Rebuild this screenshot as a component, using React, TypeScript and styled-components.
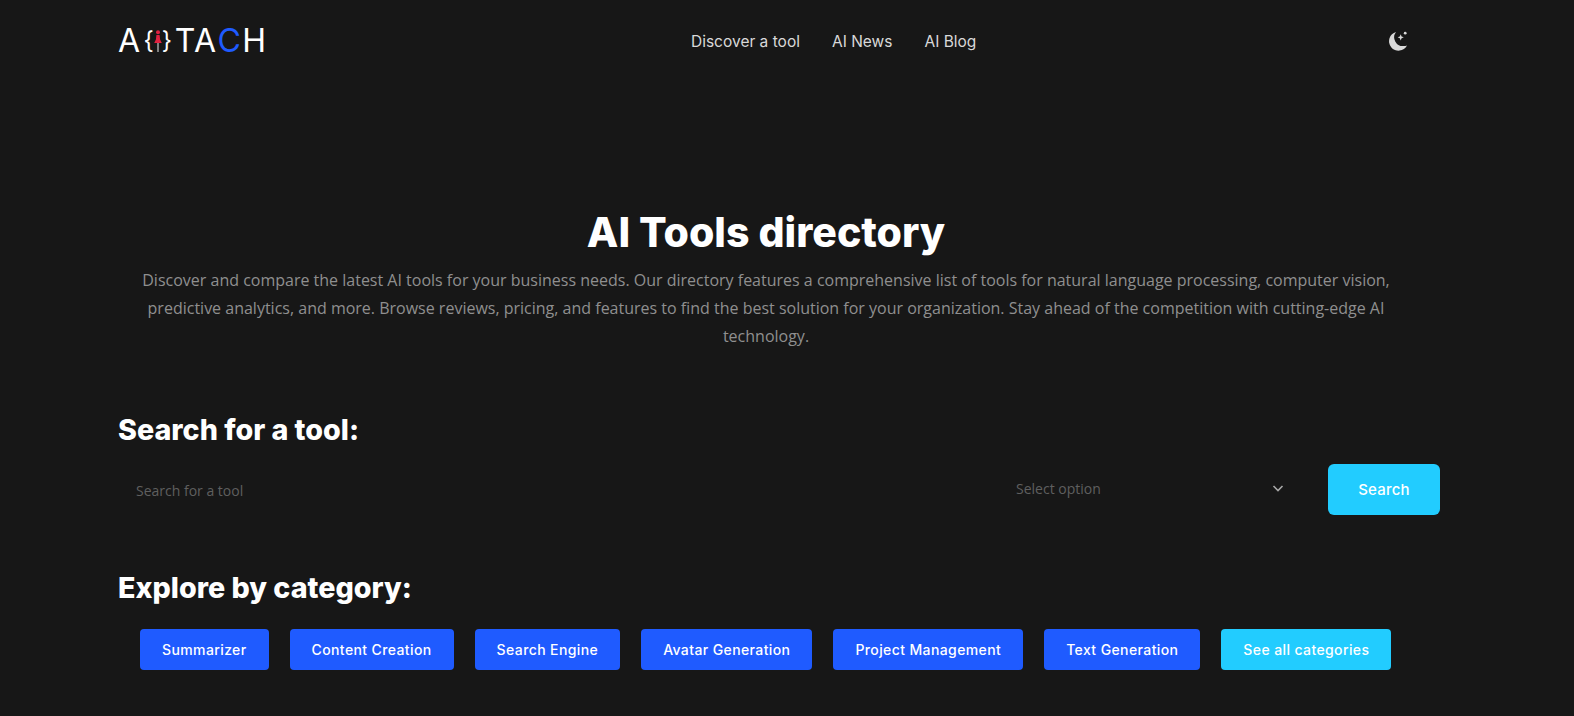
import React from "react";
import styled, { createGlobalStyle } from "styled-components";

const Global = createGlobalStyle`
  html, body { margin: 0; padding: 0; background: #171717; }
  body { font-family: "Open Sans", "Liberation Sans", sans-serif; overflow: hidden; }
`;
const display = `Inter, "Open Sans", sans-serif`;

const Page = styled.div`
  height: 716px; padding: 0 134px 0 118px; display: flex; flex-direction: column; overflow: hidden;
`;
const Header = styled.header`
  height: 82px; display: grid; grid-template-columns: 573px auto 1fr; align-items: center;
`;
const Logo = styled.div`
  display: flex; align-items: center; font-family: ${display}; font-weight: 400; font-size: 32px; line-height: 1; color: #fff; letter-spacing: 1.3px;
`;
const LogoBrace = styled.span<{ $side: "left" | "right" }>`
  font-size: 24px; font-weight: 400; letter-spacing: 0; margin: ${p => (p.$side === "left" ? "0 0 0 2px" : "0 3px 0 0")};
`;
const LogoBlue = styled.span`color: #1f5bff;`;
const Nav = styled.nav`
  display: flex; gap: 32px; font-family: ${display}; font-size: 15.5px; font-weight: 400; color: #d9d9d9;
`;
const ThemeButton = styled.div`
  justify-self: end; margin-right: 30px; display: flex; width: 22px; height: 22px; margin-top: -1px;
`;
const Hero = styled.section`
  margin-top: 123px; margin-right: 26px; text-align: center;
`;
const Title = styled.h1`
  margin: 0; font-family: ${display}; font-weight: 800; font-size: 41px; line-height: 54px; color: #fff;
`;
const Lead = styled.p`
  margin: 7px 0 0; font-size: 16px; line-height: 28px; color: #8f8f8f; padding: 0 20px;
`;
const SectionTitle = styled.h2`
  margin: 0; font-family: ${display}; font-weight: 800; font-size: 28.7px; line-height: 36px; color: #fff;
`;
const SearchSection = styled.section`margin-top: 62px;`;
const SearchRow = styled.div`
  margin-top: 16px; display: flex; align-items: center; height: 51px;
`;
const SearchField = styled.div`
  width: 898px; padding-left: 18px; font-size: 14px; color: #5f5f5f; box-sizing: border-box; padding-top: 1px;
`;
const SelectBox = styled.div`
  width: 312px; padding: 0 43px 0 0; box-sizing: border-box; display: flex; align-items: center; justify-content: space-between; font-size: 14px; color: #5f5f5f; margin-top: -3px;
`;
const SearchButton = styled.button`
  width: 112px; height: 51px; border: 0; border-radius: 6px; background: #22ccff; color: #fff; font-family: ${display}; font-size: 15px; font-weight: 500; letter-spacing: 0.2px;
`;
const CategorySection = styled.section`margin-top: 55px;`;
const Chips = styled.div`
  margin-top: 23px; display: flex; gap: 21px; padding-left: 22px;
`;
const Chip = styled.div<{ $accent?: boolean }>`
  height: 41px; padding: 0 22px; display: flex; align-items: center; border-radius: 4px; background: ${p => (p.$accent ? "#22ccff" : "#1f5bff")}; color: #fff; font-family: ${display}; font-size: 14px; font-weight: 500; letter-spacing: 0.39px; white-space: nowrap;
`;

const cats = ["Summarizer", "Content Creation", "Search Engine", "Avatar Generation", "Project Management", "Text Generation"];

export default function App() {
  return (
    <Page>
      <Global />
      <Header>
        <Logo>
          A
          <LogoBrace $side="left">{"{"}</LogoBrace>
          <svg width="8" height="24" viewBox="0 0 8 24" aria-hidden="true">
            <rect x="3.2" y="14" width="1.6" height="9" fill="#9a9a9a" />
            <circle cx="4" cy="3.2" r="2" fill="#e0213f" />
            <path d="M2.4 6h3.2l.5 4.5L7.8 14H.2l1.7-3.5z" fill="#e0213f" />
          </svg>
          <LogoBrace $side="right">{"}"}</LogoBrace>
          TA<LogoBlue>C</LogoBlue>H
        </Logo>
        <Nav>
          <span>Discover a tool</span>
          <span>AI News</span>
          <span>AI Blog</span>
        </Nav>
        <ThemeButton>
          <svg width="22" height="22" viewBox="0 0 22 22" aria-hidden="true">
            <path d="M8 2a9.5 9.5 0 1 0 11 13.5 8.5 8.5 0 0 1-3.5.6A8.8 8.8 0 0 1 8 2z" fill="#d9d9d9" />
            <path d="M12.7 4.2l.9 2.2 2.2.9-2.2.9-.9 2.2-.9-2.2-2.2-.9 2.2-.9z" fill="#d9d9d9" />
            <circle cx="17.2" cy="3.2" r="1.4" fill="#d9d9d9" />
          </svg>
        </ThemeButton>
      </Header>
      <Hero>
        <Title>AI Tools directory</Title>
        <Lead>
          Discover and compare the latest AI tools for your business needs. Our directory features a comprehensive list of tools for natural language processing, computer vision, predictive analytics, and more. Browse reviews, pricing, and features to find the best solution for your organization. Stay ahead of the competition with cutting-edge AI technology.
        </Lead>
      </Hero>
      <SearchSection>
        <SectionTitle>Search for a tool:</SectionTitle>
        <SearchRow>
          <SearchField>Search for a tool</SearchField>
          <SelectBox>
            <span>Select option</span>
            <svg width="14" height="14" viewBox="0 0 14 14" fill="none" stroke="#a8a8a8" strokeWidth="1.6" aria-hidden="true">
              <path d="M2.5 5l4.5 4.5L11.5 5" />
            </svg>
          </SelectBox>
          <SearchButton>Search</SearchButton>
        </SearchRow>
      </SearchSection>
      <CategorySection>
        <SectionTitle>Explore by category:</SectionTitle>
        <Chips>
          {cats.map(c => <Chip key={c}>{c}</Chip>)}
          <Chip $accent>See all categories</Chip>
        </Chips>
      </CategorySection>
    </Page>
  );
}
